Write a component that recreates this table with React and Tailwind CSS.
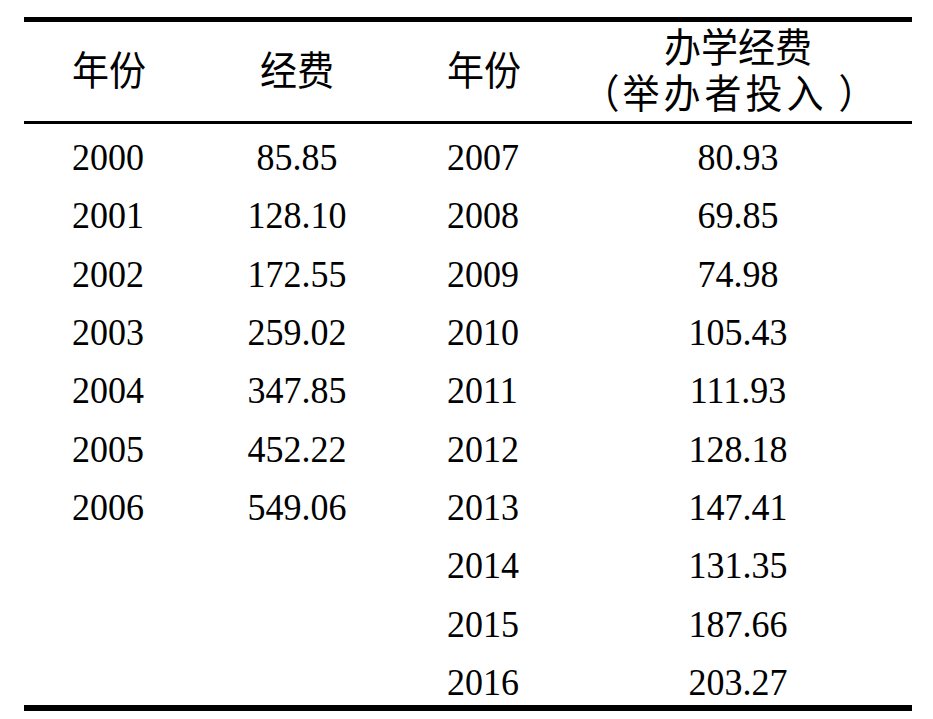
import React from "react";

const left = [
  ["2000", "85.85"],
  ["2001", "128.10"],
  ["2002", "172.55"],
  ["2003", "259.02"],
  ["2004", "347.85"],
  ["2005", "452.22"],
  ["2006", "549.06"],
];

const right = [
  ["2007", "80.93"],
  ["2008", "69.85"],
  ["2009", "74.98"],
  ["2010", "105.43"],
  ["2011", "111.93"],
  ["2012", "128.18"],
  ["2013", "147.41"],
  ["2014", "131.35"],
  ["2015", "187.66"],
  ["2016", "203.27"],
];

const cols = "grid grid-cols-[196px_154px_190px_348px]";

function T({ children }) {
  return <span className="inline-block origin-center scale-y-[1.08]">{children}</span>;
}

export default function App() {
  return (
    <div
      className="h-[719px] w-[933px] overflow-hidden bg-white px-[24px] pt-[17px] text-[36px] text-black"
      style={{ fontFamily: '"Liberation Serif", "Noto Sans CJK SC", serif' }}
    >
      <div className="w-[888px]">
        <div className="h-[5px] bg-black" />

        <div className={`${cols} h-[99px] items-center text-[37px]`}>
          <div className="pl-[48px] leading-none"><T>年份</T></div>
          <div className="text-center leading-none"><T>经费</T></div>
          <div className="pl-[73px] leading-none"><T>年份</T></div>
          <div className="flex origin-center scale-y-[1.08] flex-col items-center leading-[42px]">
            <span>办学经费</span>
            <span className="flex">
              {/* parens sit in the middle of their box in the scan's Song face */}
              <span className="inline-block w-[37px] -translate-x-[16px]">（</span>
              <span className="-translate-x-[13px] tracking-[4px]">举办者投入</span>
              <span className="inline-block w-[37px] -translate-x-[2px]">）</span>
            </span>
          </div>
        </div>

        <div className="h-[3px] bg-black" />

        <div className="pt-[4px]">
          {right.map(([year, value], i) => (
            <div key={year} className={`${cols} h-[58.3px] items-center leading-none`}>
              <div className="pl-[48px]">{left[i] ? <T>{left[i][0]}</T> : ""}</div>
              <div className="text-center">{left[i] ? <T>{left[i][1]}</T> : ""}</div>
              <div className="pl-[73px]"><T>{year}</T></div>
              <div className="text-center"><T>{value}</T></div>
            </div>
          ))}
        </div>

        <div className="-mt-[6px] h-[6px] bg-black" />
      </div>
    </div>
  );
}
